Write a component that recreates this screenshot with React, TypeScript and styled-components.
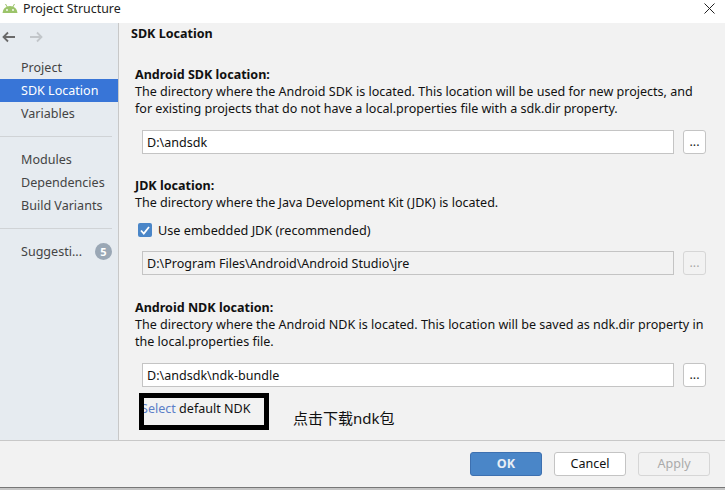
import styled, { createGlobalStyle } from "styled-components";

const GlobalStyle = createGlobalStyle`
  html, body { margin: 0; padding: 0; background: #fff; }
  body { font-family: "Noto Sans", "Noto Sans CJK SC", sans-serif; font-size: 12.55px; color: #111; }
`;

const Window = styled.div`
  width: 725px;
  height: 490px;
  display: flex;
  flex-direction: column;
  overflow: hidden;
  background: #fff;
  position: relative;
`;

const TitleBar = styled.div`
  height: 23px;
  flex: none;
  display: flex;
  align-items: center;
  padding: 0 10px 7px 2px;
  box-sizing: border-box;
  gap: 5px;
  font-size: 12.4px;
  color: #222;
`;

const TitleText = styled.div`
  flex: 1;
`;

const Main = styled.div`
  height: 417px;
  flex: none;
  display: flex;
`;

const Sidebar = styled.div`
  width: 119px;
  flex: none;
  box-sizing: border-box;
  background: #e6ebf0;
  border-right: 1px solid #c8c8c8;
  padding-top: 1px;
`;

const History = styled.div`
  height: 26px;
  display: flex;
  align-items: center;
  gap: 13px;
  padding-left: 2px;
  margin-bottom: 6px;
`;

const NavItem = styled.div<{ $active?: boolean }>`
  height: 23px;
  line-height: 22px;
  padding-left: 21px;
  display: flex;
  align-items: center;
  color: ${(p) => (p.$active ? "#fff" : "#444")};
  background: ${(p) => (p.$active ? "#3875d7" : "transparent")};
`;

const NavDivider = styled.div`
  height: 1px;
  margin: 11px 6px 11px 0;
  background: #d0d3d6;
`;

const Badge = styled.span`
  width: 17px;
  height: 17px;
  margin-left: 13px;
  border-radius: 50%;
  background: #9aa7b5;
  color: #fff;
  font-size: 11px;
  font-weight: 700;
  display: flex;
  align-items: center;
  justify-content: center;
`;

const Content = styled.div`
  flex: 1;
  background: #f2f2f2;
  padding: 0 19px 0 12px;
`;

const PageTitle = styled.div`
  font-weight: 700;
  height: 20px;
  line-height: 20px;
  margin-top: 1px;
`;

const Section = styled.div<{ $top: number }>`
  padding-left: 4px;
  margin-top: ${(p) => p.$top}px;
`;

const Heading = styled.div`
  font-weight: 700;
  line-height: 17px;
`;

const Description = styled.div`
  line-height: 17px;
  color: #111;
`;

const PathRow = styled.div`
  display: flex;
  align-items: center;
  gap: 9px;
  margin: 13px 0 0 7px;
`;

const PathField = styled.div<{ $disabled?: boolean }>`
  flex: 1;
  height: 24px;
  box-sizing: border-box;
  border: 1px solid #c4c4c4;
  background: ${(p) => (p.$disabled ? "#f2f2f2" : "#fff")};
  padding-left: 4px;
  line-height: 23px;
`;

const BrowseButton = styled.div<{ $disabled?: boolean }>`
  width: 23px;
  height: 24px;
  box-sizing: border-box;
  border: 1px solid ${(p) => (p.$disabled ? "#d6d6d6" : "#c4c4c4")};
  border-radius: 3px;
  background: ${(p) => (p.$disabled ? "#f2f2f2" : "#fff")};
  color: ${(p) => (p.$disabled ? "#aaa" : "#222")};
  text-align: center;
  line-height: 22px;
`;

const CheckRow = styled.div`
  display: flex;
  align-items: center;
  gap: 6px;
  margin: 11px 0 3px 3px;
  height: 16px;
  font-size: 12.7px;
`;

const CheckBox = styled.div`
  width: 14px;
  height: 14px;
  border-radius: 2px;
  background: #4a86c8;
  display: flex;
  align-items: center;
  justify-content: center;
`;

const SelectLine = styled.div`
  margin: 13px 0 0 6px;
  line-height: 18px;
`;

const SelectLink = styled.span`
  color: #5c7fc8;
`;

const Footer = styled.div`
  height: 48px;
  flex: none;
  box-sizing: border-box;
  background: #f2f2f2;
  border-top: 1px solid #c8c8c8;
  border-bottom: 1px solid #777;
  display: flex;
  justify-content: flex-end;
  align-items: flex-start;
  gap: 12px;
  padding: 11px 15px 0 0;
`;

const BottomEdge = styled.div`
  flex: 1;
  background: #c6c6c6;
`;

const DialogButton = styled.div<{ $kind: "primary" | "normal" | "disabled" }>`
  width: 72px;
  height: 24px;
  box-sizing: border-box;
  border-radius: 3px;
  text-align: center;
  line-height: 22px;
  border: 1px solid
    ${(p) => (p.$kind === "primary" ? "#3d70b0" : p.$kind === "normal" ? "#c4c4c4" : "#d6d6d6")};
  background: ${(p) => (p.$kind === "primary" ? "#4a86c8" : p.$kind === "normal" ? "#fff" : "#f2f2f2")};
  color: ${(p) => (p.$kind === "primary" ? "#e8eef5" : p.$kind === "normal" ? "#111" : "#aaa")};
  font-weight: ${(p) => (p.$kind === "primary" ? 700 : 400)};
`;

const HighlightBox = styled.div`
  position: absolute;
  left: 139px;
  top: 393px;
  width: 130px;
  height: 37px;
  box-sizing: border-box;
  border: 5px solid #000;
`;

const Annotation = styled.div`
  position: absolute;
  left: 293px;
  top: 408px;
  font-size: 15px;
  line-height: 20px;
  color: #111;
`;

const AndroidLogo = () => (
  <svg width="16" height="11" viewBox="0 0 16 11">
    <path d="M.5 10a7.500 7 0 0 1 15 0z" fill="#9cc46a" />
    <path d="M3.500 1 5.500 4.500M12.500 1 10.500 4.500" stroke="#9cc46a" strokeWidth="1" />
    <circle cx="5" cy="7" r="0.900" fill="#fff" />
    <circle cx="11" cy="7" r="0.900" fill="#fff" />
  </svg>
);

const CloseIcon = () => (
  <svg width="11" height="11" viewBox="0 0 11 11">
    <path d="M.5.5l10 10M10.500.5l-10 10" stroke="#222" strokeWidth="1" fill="none" />
  </svg>
);

const Arrow = ({ color, flip }: { color: string; flip?: boolean }) => (
  <svg width="14" height="12" viewBox="0 0 14 12" style={flip ? { transform: "scaleX(-1)" } : undefined}>
    <path d="M1 6h12M6 1.500 1.500 6 6 10.500" stroke={color} strokeWidth="1.800" fill="none" />
  </svg>
);

export default function App() {
  return (
    <Window>
      <GlobalStyle />
      <TitleBar>
        <AndroidLogo />
        <TitleText>Project Structure</TitleText>
        <CloseIcon />
      </TitleBar>
      <Main>
        <Sidebar>
          <History>
            <Arrow color="#6a6a6a" />
            <Arrow color="#c2c6ca" flip />
          </History>
          <NavItem>Project</NavItem>
          <NavItem $active>SDK Location</NavItem>
          <NavItem>Variables</NavItem>
          <NavDivider />
          <NavItem>Modules</NavItem>
          <NavItem>Dependencies</NavItem>
          <NavItem>Build Variants</NavItem>
          <NavDivider />
          <NavItem>
            Suggesti...
            <Badge>5</Badge>
          </NavItem>
        </Sidebar>
        <Content>
          <PageTitle>SDK Location</PageTitle>
          <Section $top={22}>
            <Heading>Android SDK location:</Heading>
            <Description>
              The directory where the Android SDK is located. This location will be used for new projects, and
              <br />
              for existing projects that do not have a local.properties file with a sdk.dir property.
            </Description>
            <PathRow>
              <PathField>D:\andsdk</PathField>
              <BrowseButton>...</BrowseButton>
            </PathRow>
          </Section>
          <Section $top={23}>
            <Heading>JDK location:</Heading>
            <Description>The directory where the Java Development Kit (JDK) is located.</Description>
            <CheckRow>
              <CheckBox>
                <svg width="10" height="9" viewBox="0 0 10 9">
                  <path d="M1 4.500 3.800 7.500 9 1" stroke="#fff" strokeWidth="1.800" fill="none" />
                </svg>
              </CheckBox>
              Use embedded JDK (recommended)
            </CheckRow>
            <PathRow>
              <PathField $disabled>D:\Program Files\Android\Android Studio\jre</PathField>
              <BrowseButton $disabled>...</BrowseButton>
            </PathRow>
          </Section>
          <Section $top={24}>
            <Heading>Android NDK location:</Heading>
            <Description>
              The directory where the Android NDK is located. This location will be saved as ndk.dir property in
              <br />
              the local.properties file.
            </Description>
            <PathRow>
              <PathField>D:\andsdk\ndk-bundle</PathField>
              <BrowseButton>...</BrowseButton>
            </PathRow>
            <SelectLine>
              <SelectLink>Select</SelectLink> default NDK
            </SelectLine>
          </Section>
        </Content>
      </Main>
      <Footer>
        <DialogButton $kind="primary">OK</DialogButton>
        <DialogButton $kind="normal">Cancel</DialogButton>
        <DialogButton $kind="disabled">Apply</DialogButton>
      </Footer>
      <BottomEdge />
      <HighlightBox />
      <Annotation>点击下载ndk包</Annotation>
    </Window>
  );
}
